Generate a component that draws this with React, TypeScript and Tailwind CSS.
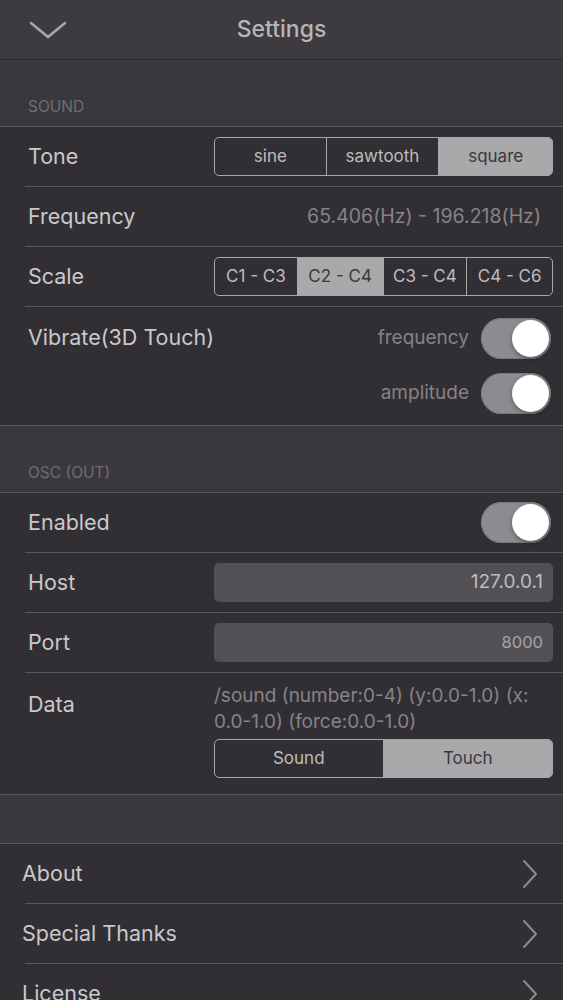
import React from "react";

const font = { fontFamily: 'Inter, "Liberation Sans", sans-serif' };

const Toggle: React.FC = () => (
  <div className="w-[70px] h-[41px] rounded-full bg-[#8d8b8f] relative shadow-[inset_0_0_0_1px_#7a787c]">
    <div className="absolute right-[2px] top-[2px] w-[37px] h-[37px] rounded-full bg-white shadow-[0_2px_4px_rgba(0,0,0,0.35)]" />
  </div>
);

interface SegProps {
  items: { label: string; w: number }[];
  selected: number;
}

const Segmented: React.FC<SegProps> = ({ items, selected }) => (
  <div className="flex w-[339px] h-[39px] rounded-[5px] border border-[#a7a6aa] overflow-hidden">
    {items.map((it, i) => (
      <div
        key={it.label}
        style={{ flex: `${it.w} 1 0` }}
        className={`flex items-center justify-center text-[17px] ${
          i === selected ? "bg-[#a9a8ab] text-[#3a383c]" : "text-[#bdbcbf]"
        } ${i > 0 ? "border-l border-[#a7a6aa]" : ""}`}
      >
        {it.label}
      </div>
    ))}
  </div>
);

const Sep: React.FC = () => <div className="ml-[25px] h-px bg-[#58565b]" />;
const FullLine: React.FC = () => <div className="h-px bg-[#5a585d]" />;

const SectionHead: React.FC<{ title: string }> = ({ title }) => (
  <div className="h-[66px] bg-[#3a383d] flex items-end pb-[8px] pl-[28px] text-[15.5px] text-[#6f6d72]">
    {title}
  </div>
);

const Chevron: React.FC = () => (
  <svg width="16" height="30" viewBox="0 0 16 30" fill="none">
    <path d="M2 2 L14 15 L2 28" stroke="#8d8b8f" strokeWidth="2" strokeLinecap="round" strokeLinejoin="round" />
  </svg>
);

const App: React.FC = () => {
  return (
    <div className="w-[563px] h-[1000px] overflow-hidden bg-[#322f34] text-[#c9c8cb]" style={font}>
      {/* top bar */}
      <div className="relative h-[60px] bg-[#3d3b40] flex items-center justify-center border-b border-[#2c2a2e]">
        <svg className="absolute left-[29px] top-[20px]" width="38" height="20" viewBox="0 0 38 20" fill="none">
          <path d="M2 3 L19 17 L36 3" stroke="#a9a8ab" strokeWidth="2.5" strokeLinecap="round" strokeLinejoin="round" />
        </svg>
        <span className="text-[23px] font-medium text-[#b6b5b8]">Settings</span>
      </div>

      <SectionHead title="SOUND" />
      <FullLine />

      <div className="h-[59px] flex items-center justify-between pl-[28px] pr-[10px]">
        <span className="text-[21.5px]">Tone</span>
        <Segmented
          items={[
            { label: "sine", w: 112 },
            { label: "sawtooth", w: 113 },
            { label: "square", w: 114 },
          ]}
          selected={2}
        />
      </div>
      <Sep />
      <div className="h-[59px] flex items-center justify-between pl-[28px] pr-[22px]">
        <span className="text-[21.5px]">Frequency</span>
        <span className="text-[19.5px] text-[#858388]">65.406(Hz) - 196.218(Hz)</span>
      </div>
      <Sep />
      <div className="h-[59px] flex items-center justify-between pl-[28px] pr-[10px]">
        <span className="text-[21.5px]">Scale</span>
        <Segmented
          items={[
            { label: "C1 - C3", w: 83 },
            { label: "C2 - C4", w: 86 },
            { label: "C3 - C4", w: 84 },
            { label: "C4 - C6", w: 86 },
          ]}
          selected={1}
        />
      </div>
      <Sep />
      <div className="h-[118px] flex justify-between pl-[28px] pr-[12px] pt-[11px]">
        <span className="text-[21.5px] mt-[3px]">Vibrate(3D Touch)</span>
        <div className="flex flex-col items-end gap-[14px]">
          <div className="flex items-center gap-[12px]">
            <span className="text-[19px] text-[#858388]">frequency</span>
            <Toggle />
          </div>
          <div className="flex items-center gap-[12px]">
            <span className="text-[19px] text-[#858388]">amplitude</span>
            <Toggle />
          </div>
        </div>
      </div>
      <FullLine />

      <SectionHead title="OSC (OUT)" />
      <FullLine />

      <div className="h-[59px] flex items-center justify-between pl-[28px] pr-[12px]">
        <span className="text-[21.5px]">Enabled</span>
        <Toggle />
      </div>
      <Sep />
      <div className="h-[59px] flex items-center justify-between pl-[28px] pr-[10px]">
        <span className="text-[21.5px]">Host</span>
        <div className="w-[339px] h-[39px] rounded-[5px] bg-[#525055] flex items-center justify-end pr-[10px] text-[19px] text-[#bdbcbf]">
          127.0.0.1
        </div>
      </div>
      <Sep />
      <div className="h-[59px] flex items-center justify-between pl-[28px] pr-[10px]">
        <span className="text-[21.5px]">Port</span>
        <div className="w-[339px] h-[39px] rounded-[5px] bg-[#525055] flex items-center justify-end pr-[10px] text-[16.5px] text-[#a5a4a8]">
          8000
        </div>
      </div>
      <Sep />
      <div className="h-[121px] flex justify-between pl-[28px] pr-[10px] pt-[10px]">
        <span className="text-[21.5px] mt-[5px]">Data</span>
        <div className="w-[339px] flex flex-col">
          <div className="text-[19px] leading-[26px] text-[#858388] whitespace-nowrap">
            /sound (number:0-4) (y:0.0-1.0) (x:
            <br />
            0.0-1.0) (force:0.0-1.0)
          </div>
          <div className="mt-[4px]">
            <Segmented
              items={[
                { label: "Sound", w: 169 },
                { label: "Touch", w: 170 },
              ]}
              selected={1}
            />
          </div>
        </div>
      </div>
      <FullLine />

      <div className="h-[48px] bg-[#3a383d]" />
      <FullLine />

      {["About", "Special Thanks", "License"].map((t, i) => (
        <div key={t}>
          {i > 0 && <Sep />}
          <div className="h-[59px] flex items-center justify-between pl-[22px] pr-[25px]">
            <span className="text-[21.5px]">{t}</span>
            <Chevron />
          </div>
        </div>
      ))}
    </div>
  );
};

export default App;
